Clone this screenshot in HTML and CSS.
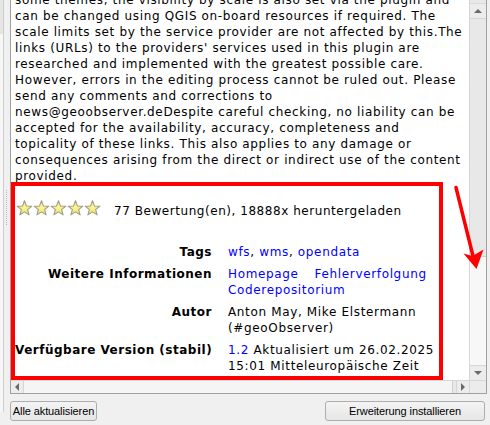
FILE: index.html
```html
<!DOCTYPE html>
<html lang="de">
<head>
<meta charset="utf-8">
<title>Erweiterung</title>
<link rel="stylesheet" href="styles.css">
</head>
<body>
<div class="page">
  <div class="list"><div class="list-sel"></div></div>
  <div class="right">
    <div class="splitter-handle"></div>
    <div class="frame">
      <div class="frame-main">
        <div class="viewport">
          <div class="content">
            <p class="desc">some themes, the visibility by scale is also set via the plugin and<br>can be changed using QGIS on-board resources if required. The<br>scale limits set by the service provider are not affected by this.The<br>links (URLs) to the providers' services used in this plugin are<br>researched and implemented with the greatest possible care.<br>However, errors in the editing process cannot be ruled out. Please<br>send any comments and corrections to<br>news@geoobserver.deDespite careful checking, no liability can be<br>accepted for the availability, accuracy, completeness and<br>topicality of these links. This also applies to any damage or<br>consequences arising from the direct or indirect use of the content<br>provided.</p>
            <div class="rating">
              <div class="stars">
                <svg class="star" viewBox="0 0 17 16" width="17" height="16"><defs><radialGradient id="sg" cx="50%" cy="45%" r="60%"><stop offset="0" stop-color="#fbf6a0"/><stop offset="1" stop-color="#ece052"/></radialGradient></defs><polygon points="8.5,0.8 10.44,5.93 15.92,6.19 11.64,9.62 13.08,14.91 8.5,11.9 3.92,14.91 5.36,9.62 1.08,6.19 6.56,5.93" fill="url(#sg)" stroke="#9e9c8e" stroke-width="1.1" stroke-linejoin="round"/></svg>
                <svg class="star" viewBox="0 0 17 16" width="17" height="16"><polygon points="8.5,0.8 10.44,5.93 15.92,6.19 11.64,9.62 13.08,14.91 8.5,11.9 3.92,14.91 5.36,9.62 1.08,6.19 6.56,5.93" fill="url(#sg)" stroke="#9e9c8e" stroke-width="1.1" stroke-linejoin="round"/></svg>
                <svg class="star" viewBox="0 0 17 16" width="17" height="16"><polygon points="8.5,0.8 10.44,5.93 15.92,6.19 11.64,9.62 13.08,14.91 8.5,11.9 3.92,14.91 5.36,9.62 1.08,6.19 6.56,5.93" fill="url(#sg)" stroke="#9e9c8e" stroke-width="1.1" stroke-linejoin="round"/></svg>
                <svg class="star" viewBox="0 0 17 16" width="17" height="16"><polygon points="8.5,0.8 10.44,5.93 15.92,6.19 11.64,9.62 13.08,14.91 8.5,11.9 3.92,14.91 5.36,9.62 1.08,6.19 6.56,5.93" fill="url(#sg)" stroke="#9e9c8e" stroke-width="1.1" stroke-linejoin="round"/></svg>
                <svg class="star" viewBox="0 0 17 16" width="17" height="16"><polygon points="8.5,0.8 10.44,5.93 15.92,6.19 11.64,9.62 13.08,14.91 8.5,11.9 3.92,14.91 5.36,9.62 1.08,6.19 6.56,5.93" fill="url(#sg)" stroke="#9e9c8e" stroke-width="1.1" stroke-linejoin="round"/></svg>
              </div>
              <span class="rating-text">77 Bewertung(en), 18888x heruntergeladen</span>
            </div>
            <div class="details">
              <div class="label">Tags</div>
              <div class="value"><a class="link">wfs</a>, <a class="link">wms</a>, <a class="link">opendata</a></div>
              <div class="label">Weitere Informationen</div>
              <div class="value"><a class="link">Homepage</a><span class="sep"></span><a class="link">Fehlerverfolgung</a><br><a class="link">Coderepositorium</a></div>
              <div class="label">Autor</div>
              <div class="value">Anton May, Mike Elstermann<br>(#geoObserver)</div>
              <div class="label">Verfügbare Version (stabil)</div>
              <div class="value"><a class="link">1.2</a> Aktualisiert um 26.02.2025<br>15:01 Mitteleuropäische Zeit</div>
            </div>
          </div>
        </div>
        <div class="vscroll">
          <div class="sb-btn sb-up"><span class="tri-up"></span></div>
          <div class="vtrack"><div class="vthumb"></div></div>
          <div class="sb-btn sb-down"><span class="tri-down"></span></div>
        </div>
      </div>
      <div class="hscroll">
        <div class="hbtn hbtn-left"><span class="tri-left"></span></div>
        <div class="hthumb"></div>
        <div class="htrack"></div>
        <div class="hbtn hbtn-right"><span class="tri-right"></span></div>
        <div class="corner"></div>
      </div>
    </div>
    <div class="buttons">
      <button class="btn btn-left">Alle aktualisieren</button>
      <button class="btn btn-right">Erweiterung installieren</button>
    </div>
  </div>
  <div class="annot-box"></div>
  <svg class="annot-arrow" viewBox="0 0 490 425" width="490" height="425">
    <line x1="456" y1="187.5" x2="473.5" y2="258" stroke="#ff0000" stroke-width="3.5" stroke-linecap="round"/>
    <polygon points="476.5,269 463.5,253.5 472.5,256 483.5,249.5" fill="#ff0000"/>
  </svg>
</div>
</body>
</html>
```

FILE: styles.css
```css
html, body {
  margin: 0;
  padding: 0;
}
body {
  background: #f0f0f0;
  font-family: "DejaVu Sans", Verdana, sans-serif;
}
.page {
  position: relative;
  width: 490px;
  height: 425px;
  overflow: hidden;
  display: flex;
  align-items: flex-start;
  background: #f0f0f0;
}
.list {
  width: 3px;
  height: 412px;
  background: #f7f7f7;
  border-right: 1px solid #cdcdcd;
  flex: none;
}
.list-sel {
  height: 34px;
  background: #e4e4e4;
}
.right {
  position: relative;
  flex: 1;
  padding-left: 6px;
  padding-right: 3px;
}
.splitter-handle {
  position: absolute;
  left: 2px;
  top: 190px;
  width: 0;
  height: 35px;
  border-left: 1px dotted #b8b8b8;
}
.frame {
  border: 1px solid #a0a0a0;
  border-top: none;
  background: #ffffff;
}
.frame-main {
  display: flex;
  height: 380px;
}
.viewport {
  flex: 1;
  overflow: hidden;
  background: #ffffff;
}
.content {
  margin-top: -8px;
  padding-left: 4px;
  font-size: 12px;
  line-height: 16px;
  letter-spacing: 0.65px;
  color: #000000;
  white-space: nowrap;
}
.desc {
  margin: 0;
}
.rating {
  display: flex;
  align-items: flex-start;
  margin-top: 16px;
}
.stars {
  display: flex;
  margin-left: 1px;
}
.star {
  display: block;
}
.rating-text {
  margin-left: 13px;
  margin-top: 3px;
  line-height: 16px;
  letter-spacing: 0.55px;
}
.details {
  display: grid;
  grid-template-columns: 197px auto;
  column-gap: 16px;
  row-gap: 6px;
  margin-top: 25px;
}
.label {
  font-weight: bold;
  text-align: right;
  letter-spacing: 0.5px;
}
.link {
  color: #0000ff;
  text-decoration: none;
}
.sep {
  display: inline-block;
  width: 16px;
}
.vscroll {
  width: 16px;
  border-left: 1px solid #d6d6d6;
  background: #e8e8e8;
  display: flex;
  flex-direction: column;
}
.sb-btn {
  height: 14px;
  flex: none;
  background: #ececec;
  display: flex;
  align-items: center;
  justify-content: center;
}
.sb-up {
  margin-top: 3px;
  border-top: 1px solid #dadada;
  border-bottom: 1px solid #d6d6d6;
}
.sb-down {
  border-top: 1px solid #d6d6d6;
}
.vtrack {
  flex: 1;
  display: flex;
  flex-direction: column;
  justify-content: flex-end;
}
.vthumb {
  height: 108px;
  background: #f7f7f7;
  border-top: 1px solid #d0d0d0;
  border-left: 1px solid #fafafa;
}
.tri-up {
  width: 0;
  height: 0;
  border-left: 4px solid transparent;
  border-right: 4px solid transparent;
  border-bottom: 4px solid #6a6a6a;
}
.tri-down {
  width: 0;
  height: 0;
  border-left: 4px solid transparent;
  border-right: 4px solid transparent;
  border-top: 4px solid #6a6a6a;
}
.tri-left {
  width: 0;
  height: 0;
  border-top: 4px solid transparent;
  border-bottom: 4px solid transparent;
  border-right: 4px solid #6a6a6a;
}
.tri-right {
  width: 0;
  height: 0;
  border-top: 4px solid transparent;
  border-bottom: 4px solid transparent;
  border-left: 4px solid #6a6a6a;
}
.hscroll {
  height: 12px;
  border-top: 1px solid #d6d6d6;
  display: flex;
  background: #e8e8e8;
}
.hbtn {
  flex: none;
  display: flex;
  align-items: center;
  justify-content: center;
  background: #ececec;
}
.hbtn-left {
  width: 12px;
  border-right: 1px solid #d6d6d6;
}
.hbtn-right {
  width: 12px;
  border-left: 1px solid #d6d6d6;
}
.hthumb {
  flex: 1;
  background: #f5f5f5;
  border-right: 1px solid #d0d0d0;
}
.htrack {
  width: 3px;
  background: #e8e8e8;
}
.corner {
  width: 16px;
  border-left: 1px solid #d6d6d6;
  background: #ececec;
}
.buttons {
  display: flex;
  justify-content: space-between;
  margin-top: 7px;
  padding-right: 2px;
}
.btn {
  height: 20px;
  padding: 0;
  margin: 0;
  border: 1px solid #adadad;
  border-radius: 3px;
  background: linear-gradient(#f4f4f4, #e6e6e6);
  font-family: "Liberation Sans", Arial, sans-serif;
  font-size: 11px;
  letter-spacing: -0.1px;
  color: #000000;
  line-height: 18px;
  white-space: nowrap;
  text-align: center;
}
.btn-left {
  width: 87px;
}
.btn-right {
  width: 160px;
}
.annot-box {
  position: absolute;
  left: 11px;
  top: 182px;
  width: 432px;
  height: 198px;
  box-sizing: border-box;
  border: 4px solid #ff0000;
}
.annot-arrow {
  position: absolute;
  left: 0;
  top: 0;
  pointer-events: none;
}
```
